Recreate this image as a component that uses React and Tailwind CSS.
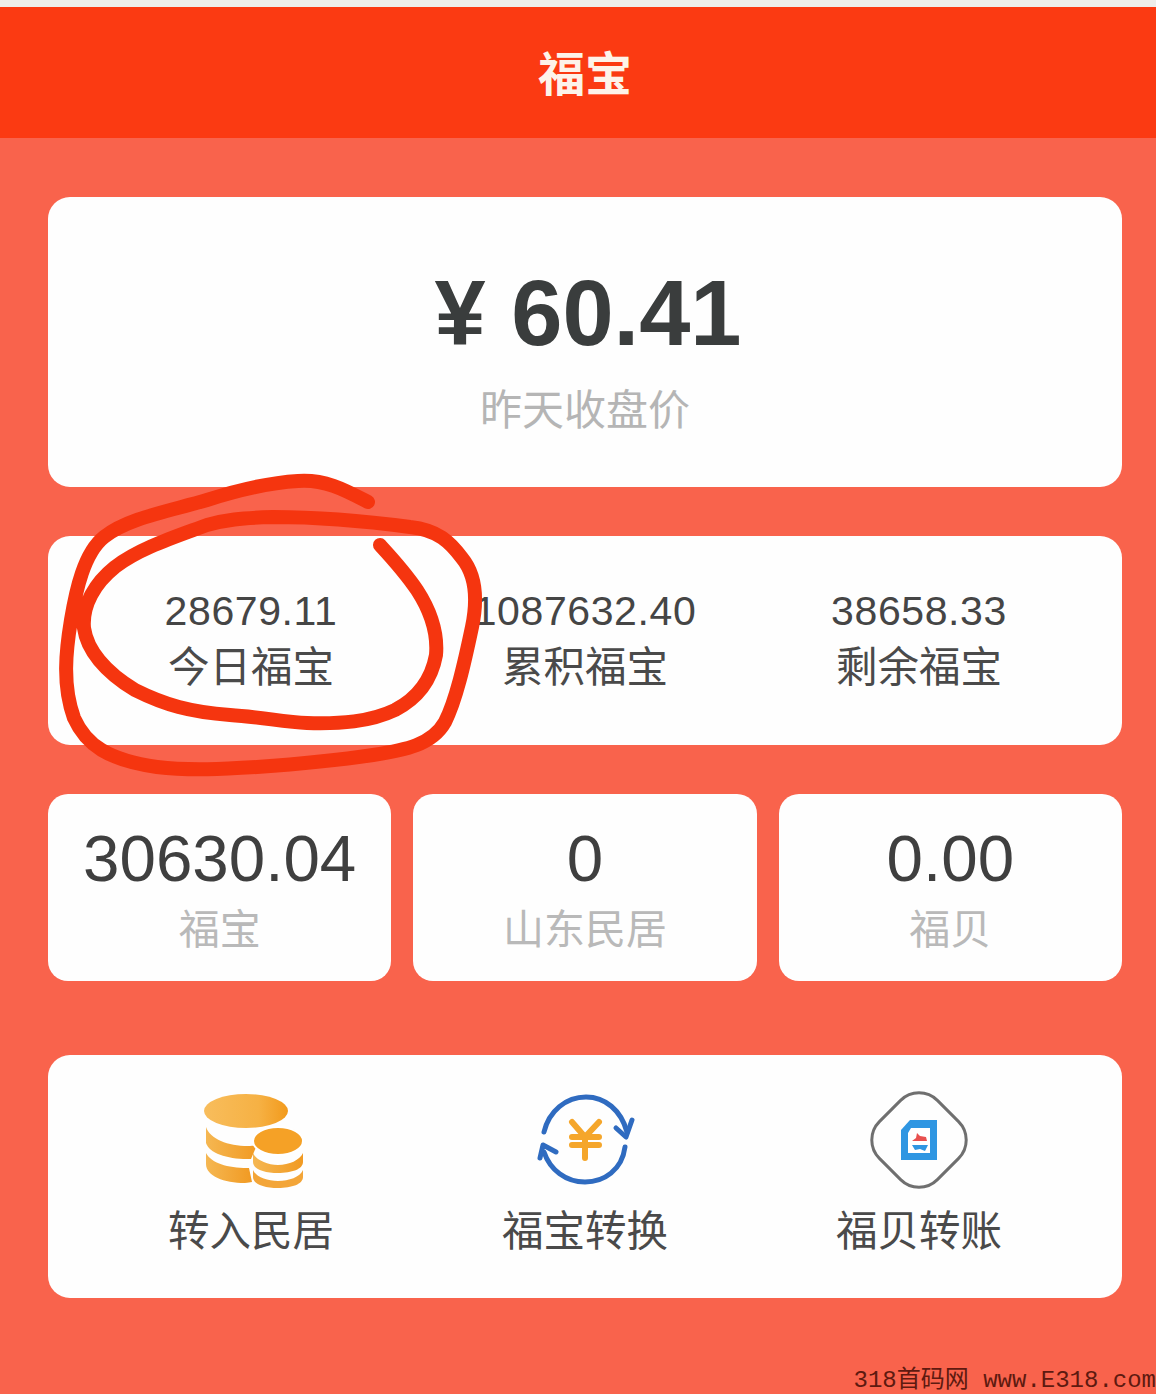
const latin = "font-['Liberation_Sans','Noto_Sans_CJK_SC',sans-serif]";

function CoinsIcon() {
  return (
    <svg width="150" height="120" viewBox="5 0 150 120" fill="none">
      <defs>
        <linearGradient id="g1" x1="0" x2="1" y1="0" y2="0">
          <stop offset="0" stopColor="#f8bd5c" />
          <stop offset="0.65" stopColor="#f6b144" />
          <stop offset="1" stopColor="#f29a1c" />
        </linearGradient>
        <linearGradient id="g2" x1="0" x2="1" y1="0" y2="0">
          <stop offset="0" stopColor="#f5b752" />
          <stop offset="1" stopColor="#f19a22" />
        </linearGradient>
      </defs>
      <ellipse cx="75" cy="31" rx="42" ry="17" fill="url(#g1)" />
      <path d="M35 47c4 12 22 19 42 19 3 0 6 0 9-1l-6 14h-4c-20 0-38-6-41-16z" fill="url(#g2)" />
      <path d="M35 73c5 10 22 15 41 15h2l3 14c-2 0-4 1-7 1-21 0-39-7-39-19z" fill="url(#g2)" />
      <ellipse cx="107" cy="61" rx="25" ry="14" fill="#f5a126" stroke="#ffffff" strokeWidth="2" />
      <path d="M82 73c3 7 14 12 25 12s22-5 25-12v9c0 7-11 11-25 11s-25-4-25-11z" fill="url(#g2)" />
      <path d="M82 90c3 7 14 11 25 11s22-4 25-11v7c0 7-11 11-25 11s-25-4-25-11z" fill="#f3a538" />
    </svg>
  );
}

function ExchangeIcon() {
  return (
    <svg width="150" height="120" viewBox="0 0 150 120" fill="none" strokeLinecap="round" strokeLinejoin="round">
      <g stroke="#2f6bc0" strokeWidth="5">
        <path d="M34 52C39 31 56 17 76 17c19 0 35 13 41 35" />
        <path d="M106 48l10 9 6-17" />
        <path d="M115 67c-3 23-21 35-40 35-19 0-35-12-41-30" />
        <path d="M30 78l3-13 13 7" />
      </g>
      <g stroke="#f5a62b" strokeWidth="6">
        <path d="M62 42l13 15 14-15" />
        <path d="M62 57h27M62 65h27M75 57v21" />
      </g>
    </svg>
  );
}

function TransferIcon() {
  return (
    <svg width="150" height="120" viewBox="-7 0 150 120" fill="none">
      <rect x="27" y="19" width="82" height="82" rx="26" transform="rotate(45 68 60)" stroke="#6f6f6f" strokeWidth="3" />
      <path d="M59 40h27v40H50V50z" fill="#2f96e2" />
      <path d="M60 48h19v25H57V53z" fill="#ffffff" />
      <path d="M61 61l4-3 1-5 3 3 6 1 1 4z" fill="#e8504f" />
      <path d="M61 65h16l-3 6-5-2-5 1z" fill="#2f96e2" />
    </svg>
  );
}

function Stat({ value, label }) {
  return (
    <div className="flex flex-col items-center">
      <div className="text-[41px] leading-[56px] tracking-[0.6px] text-[#454545] whitespace-nowrap">{value}</div>
      <div className="text-[41.5px] leading-[56px] mt-[1px] text-[#4a4a4a] whitespace-nowrap">{label}</div>
    </div>
  );
}

function Balance({ value, label }) {
  return (
    <div className="h-full bg-[#fefefe] rounded-[20px] pt-[30px] flex flex-col items-center">
      <div className="text-[65.5px] leading-[70px] text-[#3f3f3f] whitespace-nowrap">{value}</div>
      <div className="text-[41px] leading-[50px] mt-[11px] text-[#b9b9b9] whitespace-nowrap">{label}</div>
    </div>
  );
}

function Action({ icon, label }) {
  return (
    <div className="flex flex-col items-center">
      {icon}
      <div className="text-[41.5px] leading-[50px] mt-[7px] text-[#4a4a4a] whitespace-nowrap">{label}</div>
    </div>
  );
}

export default function App() {
  return (
    <div className={`relative w-[1156px] h-[1394px] overflow-hidden bg-[#f9634c] ${latin}`}>
      <div className="h-[7px] bg-[#eeeeea]" />
      <header className="h-[131px] pl-[14px] pt-[3px] bg-[#fb3a12] flex items-center justify-center">
        <h1 className="text-[47px] font-bold text-[#fdf3ea] leading-none">福宝</h1>
      </header>

      <main className="pl-[48px] pr-[34px] pt-[59px]">
        <section className="h-[290px] bg-[#fefefe] rounded-[22px] pt-[66px] flex flex-col items-center">
          <div className="text-[92px] leading-[100px] ml-[6px] font-bold text-[#3a3d3d] whitespace-nowrap">¥ 60.41</div>
          <div className="text-[42px] leading-[50px] mt-[23px] text-[#b5b5b5]">昨天收盘价</div>
        </section>

        <section className="h-[209px] mt-[49px] bg-[#fefefe] rounded-[22px] px-[36px] pt-[47px] grid grid-cols-3">
          <Stat value="28679.11" label="今日福宝" />
          <Stat value="1087632.40" label="累积福宝" />
          <Stat value="38658.33" label="剩余福宝" />
        </section>

        <section className="h-[187px] mt-[49px] grid grid-cols-3 gap-[22px]">
          <Balance value="30630.04" label="福宝" />
          <Balance value="0" label="山东民居" />
          <Balance value="0.00" label="福贝" />
        </section>

        <section className="h-[243px] mt-[74px] bg-[#fefefe] rounded-[22px] px-[36px] pt-[25px] grid grid-cols-3">
          <Action icon={<CoinsIcon />} label="转入民居" />
          <Action icon={<ExchangeIcon />} label="福宝转换" />
          <Action icon={<TransferIcon />} label="福贝转账" />
        </section>
      </main>

      {/* hand-drawn annotation over the card */}
      <svg className="absolute inset-0 pointer-events-none" width="1156" height="1394" viewBox="0 0 1156 1394" fill="none">
        <path
          d="M368 502C345 490 325 479 298 481C265 483 235 491 207 500C170 511 128 518 104 537C84 553 76 590 71 620C66 650 62 685 74 718C86 745 108 760 157 767C190 771 225 769 257 767C300 764 340 760 373 755C405 750 432 745 445 722C456 700 464 665 472 627C478 598 476 575 462 558C450 542 438 530 410 527C380 523 330 517 273 517C240 518 225 520 207 525C175 537 140 548 115 567C95 583 82 605 84 628C87 650 105 672 135 690C165 705 190 712 230 715C260 717 285 722 307 723C340 724 370 722 395 710C420 697 432 677 436 655C438 632 430 610 417 590C405 572 392 558 380 545"
          stroke="#f5350f"
          strokeWidth="14"
          strokeLinecap="round"
          strokeLinejoin="round"
        />
      </svg>

      {/* site watermark */}
      <div className="absolute right-0 bottom-0 font-['Liberation_Mono','Noto_Sans_CJK_SC',monospace] text-[24px] leading-[26px] text-[#5e1a10] whitespace-nowrap">
        318首码网 www.E318.com
      </div>
    </div>
  );
}
